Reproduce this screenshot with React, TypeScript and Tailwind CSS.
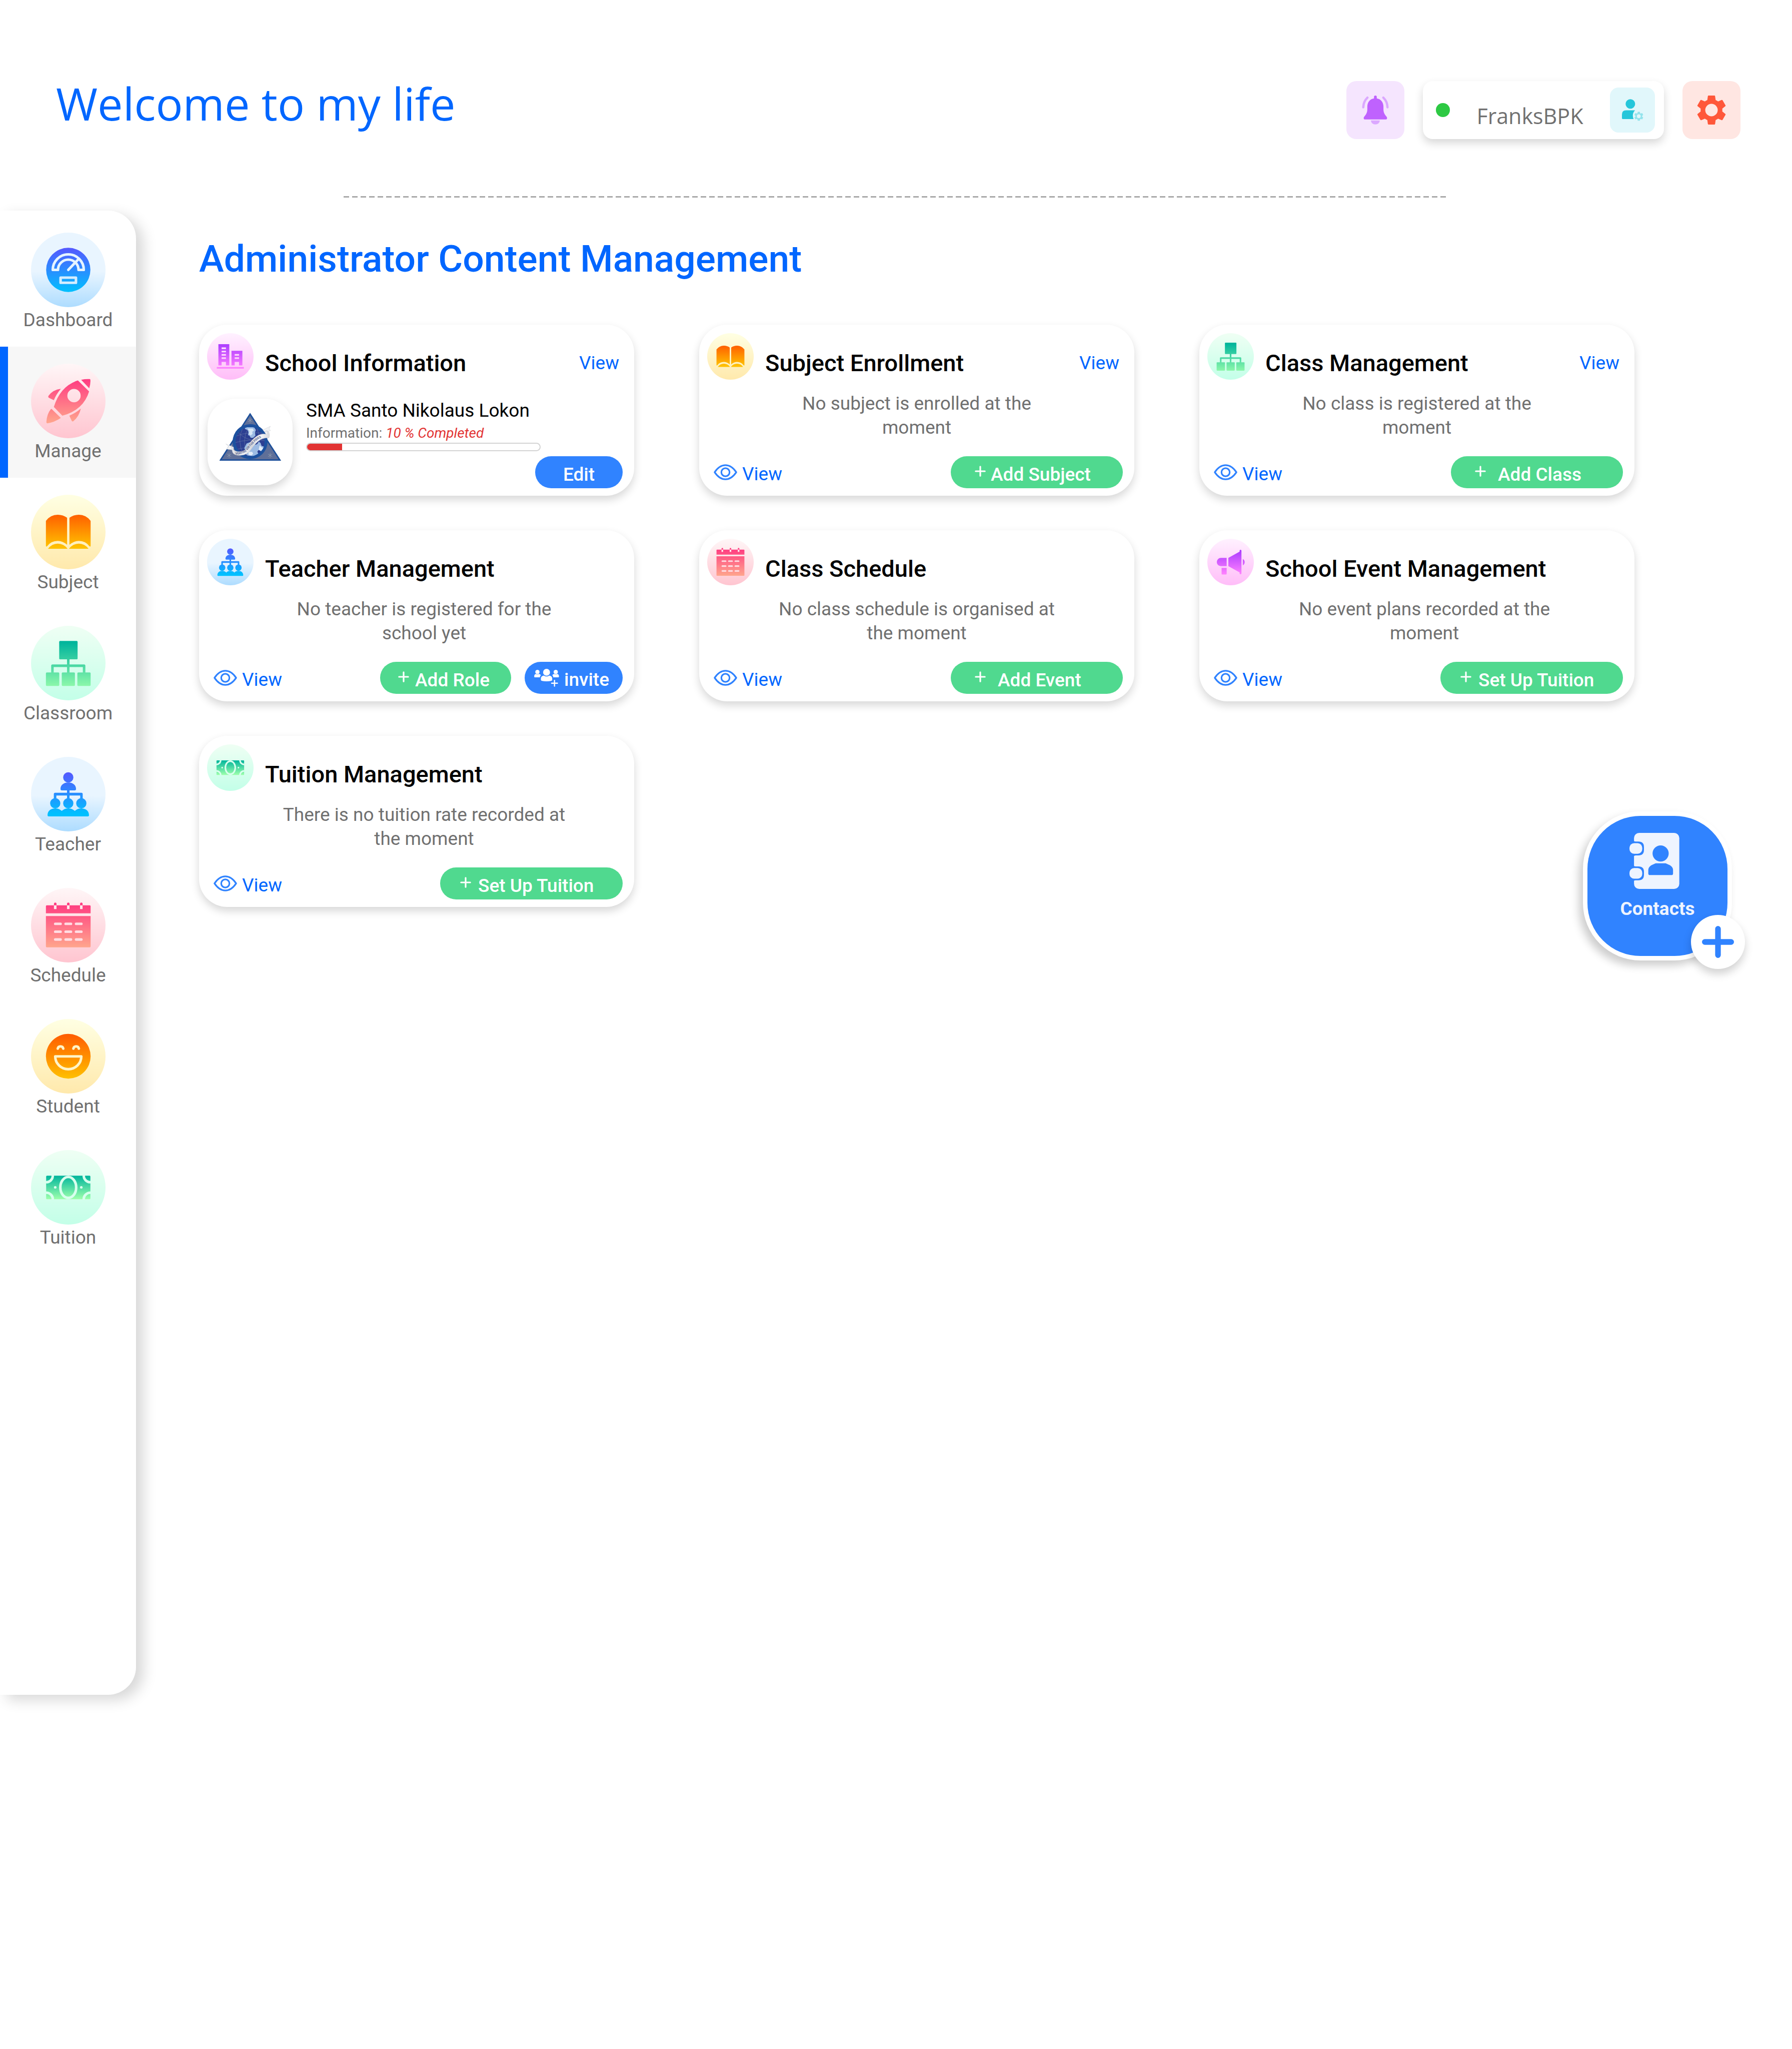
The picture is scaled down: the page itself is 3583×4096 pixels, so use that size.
import { useId } from "react";
import type { ReactNode } from "react";

type Tone = "blue" | "rose" | "amber" | "mint" | "violet";
type IconName =
  | "gauge"
  | "rocket"
  | "book"
  | "tree"
  | "people"
  | "calendar"
  | "smile"
  | "money"
  | "building"
  | "megaphone";

const discClass: Record<Tone, string> = {
  blue: "bg-[linear-gradient(#e9f5ff_52%,#addcff)]",
  rose: "bg-[linear-gradient(#fff6f7,#ffc5d0)]",
  amber: "bg-[linear-gradient(#ffffe3,#ffe9ac)]",
  mint: "bg-[linear-gradient(#effff4,#c3ffe8)]",
  violet: "bg-[linear-gradient(#fff1ff,#ffbdf8)]",
};

const inkStops: Record<Tone, [string, string]> = {
  blue: ["#5558ff", "#00c0ff"],
  rose: ["#ff3a81", "#ffa68d"],
  amber: ["#ff5b00", "#ffc000"],
  mint: ["#00b59c", "#9cffac"],
  violet: ["#a93aff", "#ff81ff"],
};

const icons: Record<IconName, { tone: Tone; from: number; to: number; art: ReactNode }> = {
  gauge: {
    tone: "blue",
    from: 33,
    to: 127,
    art: (
      <>
        <circle cx="80" cy="80" r="47.5" />
        <g fill="none" stroke="#e6f4ff" strokeWidth="5.5" strokeLinejoin="round" strokeLinecap="round">
          <path d="M46.7 80a33.3 33.3 0 0 1 66.6 0H102a22 22 0 0 0-44 0Z" />
          <path d="M80 80l22-23" />
          <path d="M63.5 96.7h33v11h-33Z" stroke="#d4edff" />
        </g>
      </>
    ),
  },
  rocket: {
    tone: "rose",
    from: 33,
    to: 128,
    art: (
      <>
        <path d="M107.7 34.5Q117 32.5 126 33Q127.5 33.3 127.5 35Q128 44 125 53Z" />
        <path
          fillRule="evenodd"
          d="M100.7 36L124.7 59.5Q113 99 67.3 111.7L49 93Q63 48 100.7 36ZM92.3 54.3a14.3 14.3 0 1 0 0 28.6a14.3 14.3 0 0 0 0-28.6Z"
        />
        <path d="M64 54Q47 56 37.5 69Q36 72 39 73.5L49 78.5Q54 66 64 54Z" />
        <path d="M107 96.5Q103 114 91 123.5Q88 125 87 122L82.3 111.7Q96 106 107 96.5Z" />
        <path d="M44.5 97.5L64 116.5Q50 126 35 128Q33 128 33 125.5Q34 108 42.5 97.8Q43.5 96.5 44.5 97.5Z" />
      </>
    ),
  },
  book: {
    tone: "amber",
    from: 40,
    to: 112,
    art: (
      <>
        <path d="M32 56Q42 43 57.3 43Q69 43 77.5 49.5V107.5Q68 99 57.3 99Q43 99 34.5 110.5Q32 112 32 110Z" />
        <path d="M36.5 116Q45 105 57.3 105Q70 105 78.5 116Z" />
        <path d="M128 56Q118 43 102.7 43Q91 43 82.5 49.5V107.5Q92 99 102.7 99Q117 99 125.5 110.5Q128 112 128 110Z" />
        <path d="M123.5 116Q115 105 102.7 105Q90 105 81.5 116Z" />
      </>
    ),
  },
  tree: {
    tone: "mint",
    from: 36,
    to: 140,
    art: (
      <>
        <rect x="60.5" y="32.5" width="39.5" height="39.5" rx="2" />
        <path d="M77.3 70h5.4v13H114q2.7 0 2.7 2.7V102h-5.4V88.7H82.7V102h-5.4V88.7H48.7V102h-5.4V85.7q0-2.7 2.7-2.7h31.3Z" />
        <rect x="32" y="100" width="28.7" height="29" rx="2" />
        <rect x="66" y="100" width="28.3" height="29" rx="2" />
        <rect x="99.5" y="100" width="28.5" height="29" rx="2" />
      </>
    ),
  },
  people: {
    tone: "blue",
    from: 33,
    to: 122,
    art: (
      <>
        <circle cx="80" cy="44" r="11" />
        <path d="M63.3 69c0-9 7-14 16.7-14s16.7 5 16.7 14q0 3-3 3H66.3q-3 0-3-3Z" />
        <path d="M77.3 70h5.4v7H108.3q2.7 0 2.7 2.7V90h-5.4v-7H82.7v8h-5.4v-8H54.4v7H49V79.7q0-2.7 2.7-2.7h25.6Z" />
        <circle cx="52" cy="99.5" r="11" />
        <circle cx="80" cy="99.5" r="11" />
        <circle cx="108" cy="99.5" r="11" />
        <path d="M35.5 125c0-9 7-14.5 16.5-14.5q8.5 0 14 5.5q5.5-5.5 14-5.5t14 5.500q5.500-5.500 14-5.500c9.500 0 16.500 5.500 16.500 14.500q0 2.700-2.700 2.700H38.200q-2.700 0-2.700-2.700Z" />
      </>
    ),
  },
  calendar: {
    tone: "rose",
    from: 33,
    to: 128,
    art: (
      <>
        <path d="M32 54.5V39.3q0-2 2-2h92q2 0 2 2v15.2ZM32 60.3h96v65.2q0 2-2 2H34q-2 0-2-2Z" />
        <rect x="49.3" y="31.5" width="5.5" height="9" rx="2.7" />
        <rect x="77.3" y="31.5" width="5.5" height="9" rx="2.7" />
        <rect x="105.3" y="31.5" width="5.5" height="9" rx="2.7" />
        <g fill="none" stroke="#ffe9ec" strokeWidth="5.5">
          <path d="M52 37.3v8M80 37.3v8M108 37.3v8" />
        </g>
        <g fill="none" stroke="#ffdce2" strokeWidth="5.5" strokeLinecap="round">
          <path d="M52 77h11.5M74.3 77h11.5M96.7 77h11.5M52 94h11.5M74.3 94h11.5M96.7 94h11.5M52 110.7h11.5M74.3 110.7h11.5M96.7 110.7h11.5" />
        </g>
      </>
    ),
  },
  smile: {
    tone: "amber",
    from: 32,
    to: 128,
    art: (
      <>
        <circle cx="80" cy="80" r="48" />
        <g fill="none" stroke="#fff4c8" strokeWidth="5.5" strokeLinecap="round" strokeLinejoin="round">
          <path d="M57.5 63.5a6 6 0 0 1 11.7 0M91 63.5a6 6 0 0 1 11.7 0" />
          <path d="M52 80.3H108A28 27.5 0 0 1 52 80.3Z" />
        </g>
      </>
    ),
  },
  money: {
    tone: "mint",
    from: 55,
    to: 105,
    art: (
      <>
        <rect x="32.5" y="55" width="95" height="50.5" rx="2" />
        <g fill="none" stroke="#d9ffee" strokeWidth="5.5">
          <ellipse cx="80" cy="80.2" rx="17" ry="22.5" />
          <path d="M46.7 54A14 14 0 0 1 32 69M113.3 54A14 14 0 0 0 128 69M46.7 106.5A14 14 0 0 0 32 91.5M113.3 106.5A14 14 0 0 1 128 91.5" />
        </g>
        <circle cx="52" cy="80" r="2.8" fill="#d9ffee" />
        <circle cx="108" cy="80" r="2.8" fill="#d9ffee" />
      </>
    ),
  },
  building: {
    tone: "violet",
    from: 36,
    to: 122,
    art: (
      <>
        <path
          fillRule="evenodd"
          d="M39 38H76.5V111H65V99H50V111H39ZM50 49V54.5H65V49ZM50 60.5V66H65V60.5ZM50 71.8V77.3H65V71.8ZM50 83V88.5H65V83ZM84 60.5H121.5V111H110V99H95V111H84ZM95 71.8V77.3H110V71.8ZM95 83V88.5H110V83Z"
        />
        <rect x="33.5" y="116.5" width="93" height="5.5" />
      </>
    ),
  },
  megaphone: {
    tone: "violet",
    from: 38,
    to: 122,
    art: (
      <>
        <path d="M46.5 66H66.5V94H46.5a14 14 0 0 1 0-28Z" />
        <path d="M72.3 66L111 44.5V41q0-3 3-3t3.3 3V119q0 3-3.3 3t-3-3V115.5L72.3 94Z" />
        <path d="M122 69.5Q128.5 73 128.5 80.5T122 91.5Z" />
        <path d="M49 100H66.5V121q0 2-2 2H51q-2 0-2-2Z" />
      </>
    ),
  },
};

function Badge({ name, className }: { name: IconName; className: string }) {
  const id = useId();
  const { tone, from, to, art } = icons[name];
  return (
    <span className={`block shrink-0 rounded-full ${discClass[tone]} ${className}`}>
      <svg viewBox="0 0 160 160" className="size-full" aria-hidden="true">
        <defs>
          <linearGradient id={id} gradientUnits="userSpaceOnUse" x1="0" y1={from} x2="0" y2={to}>
            <stop offset="0" stopColor={inkStops[tone][0]} />
            <stop offset="1" stopColor={inkStops[tone][1]} />
          </linearGradient>
        </defs>
        <g fill={`url(#${id})`}>{art}</g>
      </svg>
    </span>
  );
}

const gearPath =
  "M19.43 12.98c.04-.32.07-.64.07-.98s-.03-.66-.07-.98l2.11-1.65c.19-.15.24-.42.12-.64l-2-3.46c-.12-.22-.39-.3-.61-.22l-2.49 1c-.52-.4-1.08-.73-1.69-.98l-.38-2.65C14.46 2.18 14.25 2 14 2h-4c-.25 0-.46.18-.49.42l-.38 2.65c-.61.25-1.17.59-1.69.98l-2.49-1c-.23-.09-.49 0-.61.22l-2 3.46c-.13.22-.07.49.12.64l2.11 1.65c-.04.32-.07.65-.07.98s.03.66.07.98l-2.11 1.65c-.19.15-.24.42-.12.64l2 3.46c.12.22.39.3.61.22l2.49-1c.52.4 1.08.73 1.69.98l.38 2.65c.03.24.24.42.49.42h4c.25 0 .46-.18.49-.42l.38-2.65c.61-.25 1.17-.59 1.69-.98l2.49 1c.23.09.49 0 .61-.22l2-3.46c.12-.22.07-.49-.12-.64l-2.11-1.65zM12 7.7a4.3 4.3 0 1 0 0 8.6a4.3 4.3 0 0 0 0-8.6z";

function BellIcon() {
  return (
    <svg viewBox="0 0 58 63" className="h-[58px] w-[54px]" aria-hidden="true">
      <path
        fill="#bf62fe"
        d="M26 3a3 3 0 0 1 6 0v3.3C41 7.5 46.5 15 46.5 24v6c0 7 3 12 6.5 15.5c2.5 3 1.5 6.5-2 6.5H7c-3.5 0-4.5-3.5-2-6.5C8.5 42 11.5 37 11.5 30v-6C11.5 15 17 7.5 26 6.3Z"
      />
      <path fill="#dba8ff" d="M19.3 54h19.3a9.6 8.8 0 0 1-19.3 0Z" />
      <g fill="none" stroke="#dba8ff" strokeWidth="5" strokeLinecap="round">
        <path d="M11.8 4.5Q3 13 2.7 25.5M46.2 4.5Q55 13 55.3 25.5" />
      </g>
    </svg>
  );
}

function UserGearIcon() {
  return (
    <svg viewBox="0 0 46 47" className="h-[44px] w-[43px]" aria-hidden="true">
      <circle cx="18" cy="10.3" r="10.2" fill="#26c6da" />
      <path fill="#26c6da" d="M9 24H28Q23 29 23.3 36Q23.5 40 25 42.7H1.5Q0 42.7 0 41V33q0-9 9-9Z" />
      <path fill="#93e3ec" fillRule="evenodd" transform="translate(24.5 25.2) scale(.96)" d={gearPath} />
    </svg>
  );
}

function EyeIcon() {
  return (
    <svg viewBox="0 0 50 34" className="h-[32px] w-[47px]" fill="none" stroke="#3083ff" strokeWidth="3.5" strokeLinejoin="round" aria-hidden="true">
      <path d="M2 17Q12 2 25 2T48 17Q38 32 25 32T2 17Z" />
      <circle cx="25" cy="17" r="8.7" />
    </svg>
  );
}

function PlusIcon() {
  return (
    <svg viewBox="0 0 24 24" className="mb-1 size-[22px] shrink-0" stroke="white" strokeWidth="3.5" strokeLinecap="round" aria-hidden="true">
      <path d="M12 2V22M2 12H22" />
    </svg>
  );
}

function InviteIcon() {
  return (
    <svg viewBox="0 0 54 39" className="h-[36px] w-[50px] shrink-0" fill="white" aria-hidden="true">
      <circle cx="7" cy="6.7" r="4.6" />
      <circle cx="46.7" cy="6.7" r="4.6" />
      <path d="M0 16.5q0-5 4-5.5q3 2 6 0q3 .5 4.5 2.5Q12.5 15.5 12.5 18.5H1.5Q0 18.5 0 16.5Z" />
      <path d="M53.7 16.5q0-5-4-5.5q-3 2-6 0q-3 .5-4.5 2.5Q41.2 15.5 41.2 18.5H52.2Q53.7 18.5 53.7 16.5Z" />
      <circle cx="26.8" cy="7.5" r="7.5" />
      <path d="M14.5 24V21q0-5.5 6.5-6.5q6 4 11.6 0q6.5 1 6.5 6.500v3q0 3-12.300 3t-12.300-3Z" />
      <path d="M44 25V37.5M37.8 31.2H50.3" stroke="white" strokeWidth="2.6" strokeLinecap="round" />
    </svg>
  );
}

function SchoolCrest() {
  const id = useId();
  return (
    <svg viewBox="0 0 132 104" className="h-[97px] w-[123px]" role="img" aria-label="School crest">
      <defs>
        <clipPath id={`${id}g`}>
          <circle cx="65.5" cy="62" r="31.5" />
        </clipPath>
        <linearGradient id={`${id}r`} x1="0" y1="0" x2="1" y2="0">
          <stop offset="0" stopColor="#f6f6f8" />
          <stop offset="0.12" stopColor="#d3d4d9" />
          <stop offset="0.3" stopColor="#f7f7f9" />
          <stop offset="0.55" stopColor="#d6d7dc" />
          <stop offset="0.75" stopColor="#f8f8fa" />
          <stop offset="1" stopColor="#d8d9de" />
        </linearGradient>
      </defs>
      <path d="M65.5 3L129.500 101.500H2Z" fill="#5f6f98" stroke="#1c4f9a" strokeWidth="3" />
      <g stroke="#aab4b8" strokeWidth="0.6">
        <path d="M65.500 11v11M61 13.500l9 6M70 13.500l-9 6M20.500 86v11M16 88.500l9 6M25 88.500l-9 6M108.500 86v11M104 88.500l9 6M113 88.500l-9 6" />
      </g>
      <circle cx="65.5" cy="62" r="37.5" fill="#1c519f" />
      <circle cx="65.5" cy="62" r="31" fill="#2c3f92" />
      <g clipPath={`url(#${id}g)`}>
        <g fill="none" stroke="#7484ad" strokeWidth="0.6">
          <path d="M36 50Q60 40 94 44M34 64Q60 56 98 60M40 78Q60 72 92 78M50 32Q36 60 52 92M62 30Q46 60 60 94M80 32Q92 60 78 92M40 42Q62 66 96 56" />
        </g>
        <path
          fill="#9dbbe3"
          d="M54 33l4-2h16l4 6l-2 5l1 7l-5 5l-5 0l-3-5l-3-1l1-6l-2-5l-5-2Z"
        />
        <path fill="#d9e7f6" d="M60 34h11l3 4l-4 3l1 4l-4 4l-4-3l1-6Z" />
        <path
          fill="#9dbbe3"
          d="M58 66l8-3l8 1l3 5l4-2l3-5l4 3l2 6l6 2l-6 10l-6-3l-3 3l2 5l-10 5l-12-1l-8-5l3-5l-3-6Z"
        />
        <path fill="#e3edf8" d="M60 69l8-2l3 4l-5 5l-5 0ZM86 70l4 4l4 2l-5 6l-5-3ZM62 84l8 0l2 4l-4 4l-6-2Z" />
      </g>
      <path d="M30 74L13.500 67L19.500 72L15 78L30 80ZM93 37L109 29L106 35L109.500 38L98 43Z" fill="#f2f3f5" stroke="#cfd1d6" strokeWidth="0.7" />
      <path
        fill={`url(#${id}r)`}
        stroke="#c3c5cc"
        strokeWidth="0.6"
        d="M25 69Q28 82 38 83.500Q52 85 58 76Q68 57 82 49Q92 44 99 46Q105 43 101 39L97 41Q102 36 106 42Q108 48 106 54Q92 53 83 61Q74 69 68 78Q60 91 45 91.500Q31 92 28 85Q26 78 25 69Z"
      />
      <path id={`${id}t`} fill="none" d="M34 89.500Q53 90 61 79T80 59Q90 51 107 50" />
      <text fontSize="6.5" fontWeight="700" fill="#5a6793" fontFamily="Roboto, sans-serif">
        <textPath href={`#${id}t`}>VERITAS VIRTUS FIDES</textPath>
      </text>
    </svg>
  );
}

function ContactsIcon() {
  return (
    <svg viewBox="0 0 107 120" className="h-[112px] w-[100px]" aria-hidden="true">
      <rect x="9.7" y="0" width="97" height="120" rx="11" fill="#eef4ff" />
      <g fill="#3083ff">
        <path d="M8 16Q10 18.5 13 18.5H19Q31 18.5 31 30V36.5Q31 48.3 19 48.3H13Q10 48.3 8 51Z" />
        <path d="M8 69Q10 71.7 13 71.7H19Q31 71.7 31 83V89.8Q31 101.6 19 101.6H13Q10 101.6 8 104Z" />
        <circle cx="66.7" cy="44" r="17.3" />
        <path d="M56 65H77.5L87 69.5Q93.3 74 93.3 79V87q0 3.3-3.3 3.3H43.6q-3.3 0-3.3-3.3V79Q40.3 74 46.5 69.5Z" />
      </g>
      <rect x="0" y="22" width="27.3" height="22.7" rx="10" fill="#eef4ff" />
      <rect x="0" y="75.3" width="27.3" height="22.7" rx="10" fill="#eef4ff" />
    </svg>
  );
}

const navItems: { label: string; icon: IconName; active?: boolean }[] = [
  { label: "Dashboard", icon: "gauge" },
  { label: "Manage", icon: "rocket", active: true },
  { label: "Subject", icon: "book" },
  { label: "Classroom", icon: "tree" },
  { label: "Teacher", icon: "people" },
  { label: "Schedule", icon: "calendar" },
  { label: "Student", icon: "smile" },
  { label: "Tuition", icon: "money" },
];

function Sidebar() {
  return (
    <aside className="min-h-[2967px] w-[272px] shrink-0 rounded-r-[56px] bg-white shadow-[14px_10px_28px_rgba(0,0,0,0.16)]">
      <nav className="flex flex-col pt-[10px]">
        {navItems.map((item) => (
          <a
            key={item.label}
            href="#"
            className={`relative flex h-[262px] flex-col items-center pt-[34px] text-[37px] leading-[44px] text-[#707070] ${
              item.active ? "bg-[#f7f7f7]" : ""
            }`}
          >
            {item.active && <span className="absolute inset-y-0 left-0 w-4 bg-[#0066ff]" />}
            <Badge name={item.icon} className="size-[149px]" />
            <span className="mt-1">{item.label}</span>
          </a>
        ))}
      </nav>
    </aside>
  );
}

function Header() {
  return (
    <header className="flex items-start justify-between pt-[162px] pr-[103px] pl-[112px]">
      <h1 className="font-['Open_Sans','Noto_Sans',sans-serif] text-[90px] leading-[88px] text-[#0066ff]">
        Welcome to my life
      </h1>
      <div className="flex gap-[37px]">
        <button type="button" aria-label="Notifications" className="flex size-[116px] items-center justify-center rounded-[20px] bg-[#f5e5fe]">
          <BellIcon />
        </button>
        <div className="flex h-[116px] w-[482px] items-center rounded-[20px] bg-white pr-[18px] pl-[26px] shadow-[0_8px_17px_rgba(0,0,0,0.16)]">
          <span className="size-7 rounded-full bg-[#2dc943]" />
          <span className="flex-1 pt-6 text-center font-['Open_Sans','Noto_Sans',sans-serif] text-[43px] leading-[56px] text-[#707070]">
            FranksBPK
          </span>
          <button type="button" aria-label="Account settings" className="flex size-[90px] items-center justify-center rounded-[17px] bg-[#e1f7fb]">
            <UserGearIcon />
          </button>
        </div>
        <button type="button" aria-label="Settings" className="flex size-[116px] items-center justify-center rounded-[20px] bg-[#ffe6e2]">
          <svg viewBox="2 2 20 20" className="size-[58px]" aria-hidden="true">
            <path fill="#ff573a" fillRule="evenodd" d={gearPath} />
          </svg>
        </button>
      </div>
    </header>
  );
}

function Card({ icon, title, headerLink, children }: { icon: IconName; title: string; headerLink?: boolean; children: ReactNode }) {
  return (
    <article className="rounded-[56px] bg-white pt-[17px] pb-[15px] shadow-[0_8px_17px_rgba(0,0,0,0.16)]">
      <div className="flex items-start pr-[30px] pl-4">
        <Badge name={icon} className="size-[93px]" />
        <h3 className="mt-8 ml-[23px] flex-1 text-[47px] leading-[56px] font-medium text-black">{title}</h3>
        {headerLink && (
          <a href="#" className="mt-8 text-[37px] leading-[56px] text-[#0066ff]">
            View
          </a>
        )}
      </div>
      {children}
    </article>
  );
}

type EmptyCardProps = {
  icon: IconName;
  title: string;
  text: string;
  action: string;
  actionClass: string;
  headerLink?: boolean;
  textClass?: string;
  invite?: boolean;
};

const cards: EmptyCardProps[] = [
  {
    icon: "book",
    title: "Subject Enrollment",
    text: "No subject is enrolled at the moment",
    action: "Add Subject",
    actionClass: "w-[344px] pl-12 gap-[10px]",
    headerLink: true,
  },
  {
    icon: "tree",
    title: "Class Management",
    text: "No class is registered at the moment",
    action: "Add Class",
    actionClass: "w-[344px] pl-12 gap-6",
    headerLink: true,
  },
  {
    icon: "people",
    title: "Teacher Management",
    text: "No teacher is registered for the school yet",
    action: "Add Role",
    actionClass: "w-[262px] pl-9 gap-3",
    textClass: "pl-[30px]",
    invite: true,
  },
  {
    icon: "calendar",
    title: "Class Schedule",
    text: "No class schedule is organised at the moment",
    action: "Add Event",
    actionClass: "w-[344px] pl-12 gap-6",
  },
  {
    icon: "megaphone",
    title: "School Event Management",
    text: "No event plans recorded at the moment",
    action: "Set Up Tuition",
    actionClass: "w-[365px] pl-10 gap-[14px]",
    textClass: "pl-[30px]",
  },
  {
    icon: "money",
    title: "Tuition Management",
    text: "There is no tuition rate recorded at the moment",
    action: "Set Up Tuition",
    actionClass: "w-[365px] pl-10 gap-[14px]",
    textClass: "pl-[30px]",
  },
];

function EmptyCard({ icon, title, text, action, actionClass, headerLink, textClass = "", invite }: EmptyCardProps) {
  return (
    <Card icon={icon} title={title} headerLink={headerLink}>
      <div className={`mt-6 flex justify-center ${textClass}`}>
        <p className="max-w-[588px] text-center text-[37px] leading-[48px] text-[#707070]">{text}</p>
      </div>
      <div className="mt-[33px] flex items-center pr-[23px] pl-[29px]">
        <a href="#" className="flex items-center gap-[10px] text-[37px] leading-[48px] text-[#0066ff]">
          <EyeIcon />
          <span className="pt-2">View</span>
        </a>
        <div className="ml-auto flex gap-[27px] text-[37px] leading-[48px] font-medium text-white">
          <button type="button" className={`flex h-16 items-center rounded-full bg-[#50d98f] whitespace-nowrap ${actionClass}`}>
            <PlusIcon />
            <span className="pt-[10px]">{action}</span>
          </button>
          {invite && (
            <button type="button" className="flex h-16 w-[196px] items-center gap-[10px] rounded-full bg-[#3083ff] pl-[19px]">
              <InviteIcon />
              <span className="pt-2">invite</span>
            </button>
          )}
        </div>
      </div>
    </Card>
  );
}

function SchoolCard() {
  const progress = 15;
  return (
    <Card icon="building" title="School Information" headerLink>
      <div className="mt-[38px] flex items-start pr-[23px] pl-[17px]">
        <div className="flex h-[173px] w-[170px] shrink-0 justify-center rounded-[56px] bg-white pt-7 shadow-[0_8px_17px_rgba(0,0,0,0.16)]">
          <SchoolCrest />
        </div>
        <div className="flex flex-1 flex-col pl-[27px]">
          <p className="text-[37px] leading-[48px] text-black">SMA Santo Nikolaus Lokon</p>
          <p className="mt-[2px] text-[28px] leading-[38px] text-[#707070]">
            Information: <em className="text-[#e23333]">10 % Completed</em>
          </p>
          <div className="h-[17px] w-[469px] overflow-hidden rounded-full border-2 border-[#d3d3d3]">
            <div className="h-full bg-[#e23333]" style={{ width: `${progress}%` }} />
          </div>
          <button type="button" className="mt-[10px] flex h-16 w-[175px] items-center justify-center self-end rounded-full bg-[#3083ff] text-[37px] leading-[48px] font-medium text-white">
            <span className="pt-[10px]">Edit</span>
          </button>
        </div>
      </div>
    </Card>
  );
}

function ContactsButton() {
  return (
    <div className="absolute top-[1631px] right-[129px]">
      <button
        type="button"
        className="flex size-[280px] flex-col items-center rounded-[106px] bg-[#3083ff] pt-[34px] text-[37px] leading-[48px] font-bold text-[#eef4ff] shadow-[0_0_0_9px_white,-8px_10px_17px_9px_rgba(0,0,0,0.2)]"
      >
        <span className="pr-3">
          <ContactsIcon />
        </span>
        <span className="mt-4">Contacts</span>
      </button>
      <button
        type="button"
        aria-label="Add contact"
        className="absolute -right-[35px] -bottom-[26px] flex size-[108px] items-center justify-center rounded-full bg-white shadow-[0_10px_17px_rgba(0,0,0,0.18)]"
      >
        <svg viewBox="0 0 68 68" className="size-16" stroke="#3083ff" strokeWidth="12" strokeLinecap="round" aria-hidden="true">
          <path d="M34 6V62M6 34H62" />
        </svg>
      </button>
    </div>
  );
}

export default function App() {
  return (
    <div className="relative min-h-screen overflow-x-hidden bg-white font-['Roboto',sans-serif]">
      <Header />
      <div className="mx-auto mt-[114px] h-[3px] w-[2210px] max-w-full bg-[repeating-linear-gradient(90deg,#aaaaaa_0_11px,transparent_11px_17px)]" />
      <div className="mt-[26px] flex items-start">
        <Sidebar />
        <main className="flex-1 pt-14 pr-[315px] pl-[126px]">
          <h2 className="text-[75px] leading-[80px] font-medium text-[#0066ff]">Administrator Content Management</h2>
          <section className="mt-[92px] grid grid-cols-3 gap-x-[130px] gap-y-[69px]">
            <SchoolCard />
            {cards.map((card) => (
              <EmptyCard key={card.title} {...card} />
            ))}
          </section>
        </main>
      </div>
      <ContactsButton />
    </div>
  );
}
